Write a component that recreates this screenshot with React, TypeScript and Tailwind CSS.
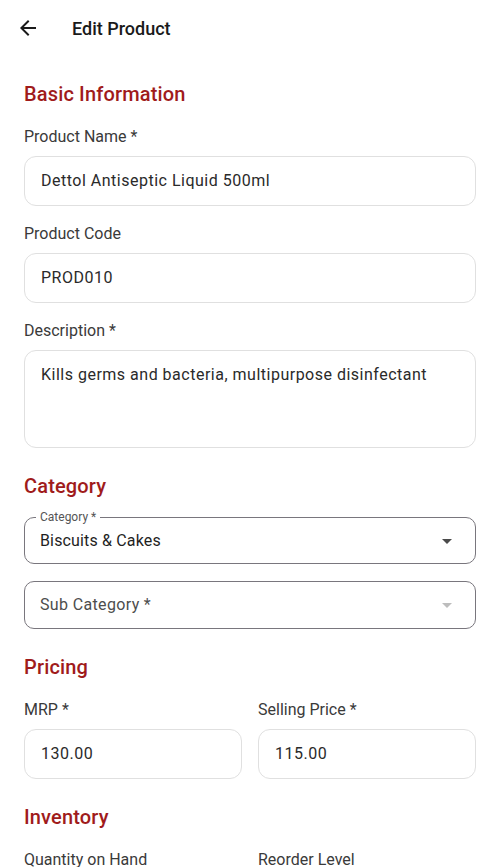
import React from "react";

const font = { fontFamily: "Roboto, 'Noto Sans', Arial, sans-serif" };

function Heading({ children }: { children: React.ReactNode }) {
  return (
    <h2 className="text-[20px] leading-[28px] font-medium text-[#a01b1b] mb-4 tracking-[0.15px]">
      {children}
    </h2>
  );
}

function Field({
  label,
  value,
  multiline,
}: {
  label: string;
  value: string;
  multiline?: boolean;
}) {
  return (
    <div className="flex flex-col min-w-0">
      <label className="pt-px text-[16px] leading-[24px] text-[#3a3a3a] mb-[7px]">{label}</label>
      {multiline ? (
        <div className="h-[98px] border border-[#e0e0e0] rounded-[12px] px-4 pt-[15px] text-[16px] leading-[18px] text-[#2a2a2a] tracking-[0.5px]">
          {value}
        </div>
      ) : (
        <div className="h-[50px] border border-[#e0e0e0] rounded-[12px] px-4 flex items-center text-[16px] text-[#2a2a2a] tracking-[0.5px]">
          {value}
        </div>
      )}
    </div>
  );
}

function Caret({ color }: { color: string }) {
  return (
    <svg width="24" height="24" viewBox="0 0 24 24">
      <path d="M7 10l5 5 5-5z" fill={color} />
    </svg>
  );
}

export default function App() {
  return (
    <div className="w-[500px] h-[867px] bg-white overflow-hidden" style={font}>
      <header className="h-[56px] flex items-center pl-4">
        <svg width="24" height="24" viewBox="0 0 24 24" className="shrink-0">
          <path
            d="M20 11H7.83l5.59-5.59L12 4l-8 8 8 8 1.41-1.41L7.83 13H20v-2z"
            fill="#1a1a1a"
          />
        </svg>
        <h1 className="ml-8 text-[18px] font-medium text-[#1a1a1a]">Edit Product</h1>
      </header>

      <main className="px-6 pt-6 flex flex-col gap-6">
        <section>
          <Heading>Basic Information</Heading>
          <div className="flex flex-col gap-[15px]">
            <Field label="Product Name *" value="Dettol Antiseptic Liquid 500ml" />
            <Field label="Product Code" value="PROD010" />
            <Field
              label="Description *"
              value="Kills germs and bacteria, multipurpose disinfectant"
              multiline
            />
          </div>
        </section>

        <section>
          <Heading>Category</Heading>
          <div className="flex flex-col gap-[17px]">
            <fieldset className="h-[53px] -mt-[5px] border border-[#79767d] rounded-[10px] pl-[11px] pr-[16px] flex items-start">
              <legend className="px-[4px] text-[12px] leading-[12px] text-[#555]">
                Category *
              </legend>
              <div className="flex-1 flex items-center justify-between h-[41px] pl-[4px]">
                <span className="text-[16px] text-[#1f1f1f] tracking-[0.15px] -mt-[6px]">
                  Biscuits &amp; Cakes
                </span>
                <span className="-mt-[6px]">
                  <Caret color="#4a4a4a" />
                </span>
              </div>
            </fieldset>
            <div className="h-[48px] border border-[#79767d] rounded-[10px] pl-[15px] pr-4 flex items-center justify-between">
              <span className="text-[16px] text-[#4d4d4d] tracking-[0.35px]">Sub Category *</span>
              <Caret color="#bdbdbd" />
            </div>
          </div>
        </section>

        <section>
          <Heading>Pricing</Heading>
          <div className="grid grid-cols-2 gap-4">
            <Field label="MRP *" value="130.00" />
            <Field label="Selling Price *" value="115.00" />
          </div>
        </section>

        <section>
          <Heading>Inventory</Heading>
          <div className="grid grid-cols-2 gap-4">
            <Field label="Quantity on Hand" value="" />
            <Field label="Reorder Level" value="" />
          </div>
        </section>
      </main>
    </div>
  );
}
